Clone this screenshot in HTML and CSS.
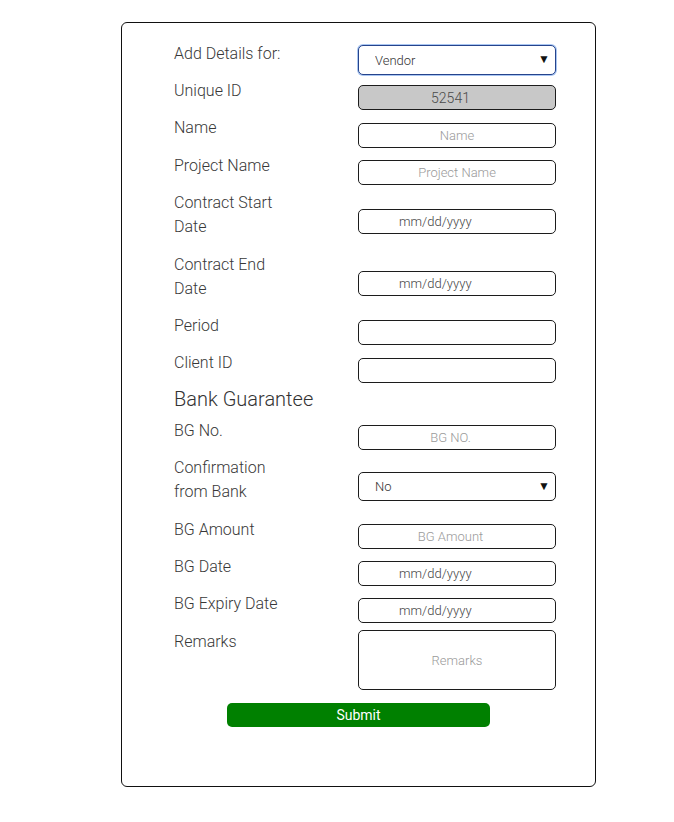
FILE: index.html
```html
<!DOCTYPE html>
<html>
<head>
<meta charset="utf-8">
<title>Add Details</title>
<link rel="stylesheet" href="styles.css">
</head>
<body>
<div class="page">
  <form class="card">
    <div class="grid">
      <div class="row">
        <label class="lbl">Add Details for:</label>
        <div class="select-wrap focused">
          <select class="field select"><option>Vendor</option></select>
          <span class="arrow">▼</span>
        </div>
      </div>
      <div class="row">
        <label class="lbl">Unique ID</label>
        <input class="field readonly num" type="text" value="52541" readonly>
      </div>
      <div class="row">
        <label class="lbl">Name</label>
        <input class="field" type="text" placeholder="Name">
      </div>
      <div class="row">
        <label class="lbl">Project Name</label>
        <input class="field" type="text" placeholder="Project Name">
      </div>
      <div class="row">
        <label class="lbl">Contract Start Date</label>
        <input class="field date" type="text" placeholder="mm/dd/yyyy">
      </div>
      <div class="row">
        <label class="lbl">Contract End Date</label>
        <input class="field date" type="text" placeholder="mm/dd/yyyy">
      </div>
      <div class="row">
        <label class="lbl">Period</label>
        <input class="field" type="text">
      </div>
      <div class="row">
        <label class="lbl">Client ID</label>
        <input class="field" type="text">
      </div>
      <h2 class="section">Bank Guarantee</h2>
      <div class="row">
        <label class="lbl">BG No.</label>
        <input class="field num" type="text" placeholder="BG NO.">
      </div>
      <div class="row">
        <label class="lbl">Confirmation from Bank</label>
        <div class="select-wrap">
          <select class="field select small"><option>No</option></select>
          <span class="arrow">▼</span>
        </div>
      </div>
      <div class="row">
        <label class="lbl">BG Amount</label>
        <input class="field num" type="text" placeholder="BG Amount">
      </div>
      <div class="row">
        <label class="lbl">BG Date</label>
        <input class="field date" type="text" placeholder="mm/dd/yyyy">
      </div>
      <div class="row">
        <label class="lbl">BG Expiry Date</label>
        <input class="field date" type="text" placeholder="mm/dd/yyyy">
      </div>
      <div class="row">
        <label class="lbl">Remarks</label>
        <textarea class="field area" placeholder="Remarks"></textarea>
      </div>
    </div>
    <div class="actions">
      <button type="button" class="submit">Submit</button>
    </div>
  </form>
</div>
</body>
</html>
```
FILE: styles.css
```css
* { box-sizing: border-box; }

body {
  margin: 0;
  background: #fff;
  font-family: Roboto, "Liberation Sans", sans-serif;
  font-weight: 300;
  color: #333;
}

.page {
  padding: 22px 0 0 121px;
}

.card {
  width: 475px;
  border: 1px solid #111;
  border-radius: 6px;
  padding: 18.6px 0 59.5px;
}

.grid {
  margin-left: 52px;
  width: 382px;
}

.row {
  display: grid;
  grid-template-columns: 184px 198px;
}

.lbl {
  align-self: start;
  max-width: 112px;
  font-size: 16px;
  line-height: 24px;
  padding-bottom: 13.4px;
  color: #383838;
}

.field {
  align-self: center;
  width: 198px;
  height: 25px;
  border: 1px solid #1c1c1c;
  border-radius: 5px;
  background: #fff;
  font-family: Roboto, "Liberation Sans", sans-serif;
  font-weight: 300;
  font-size: 13px;
  color: #444;
  text-align: center;
  padding: 0;
  outline: none;
}

.field::placeholder {
  color: #9a9a9a;
  opacity: 1;
}

.num {
  padding-right: 13px;
}

.readonly {
  background: #c8c8c8;
  color: #4a4a4a;
  font-size: 14px;
}

.date {
  text-align: left;
  padding-left: 40px;
}

.date::placeholder {
  color: #444;
}

.select-wrap {
  align-self: center;
  position: relative;
  width: 198px;
  height: 30px;
}

.select {
  -webkit-appearance: none;
  appearance: none;
  height: 30px;
  text-align: left;
  padding-left: 16px;
  color: #333;
}

.select.small {
  height: 29px;
}

.focused .select {
  border-color: #26448c;
  box-shadow: 0 0 0 1px #a9c6f2;
}

.arrow {
  position: absolute;
  right: 6px;
  top: 8px;
  font-size: 12px;
  line-height: 13px;
  color: #111;
  pointer-events: none;
}

.section {
  margin: 0 0 10px;
  font-size: 20px;
  line-height: 20px;
  font-weight: 300;
  color: #333;
}

.area {
  height: 60px;
  resize: none;
  padding-top: 22px;
  line-height: 16px;
  align-self: start;
}

.actions {
  display: flex;
  justify-content: center;
  margin-top: 13px;
}

.submit {
  width: 263px;
  height: 24px;
  border: none;
  border-radius: 5px;
  background: #008000;
  color: #fff;
  font-family: Roboto, "Liberation Sans", sans-serif;
  font-weight: 400;
  font-size: 14px;
  padding: 0;
}
```
